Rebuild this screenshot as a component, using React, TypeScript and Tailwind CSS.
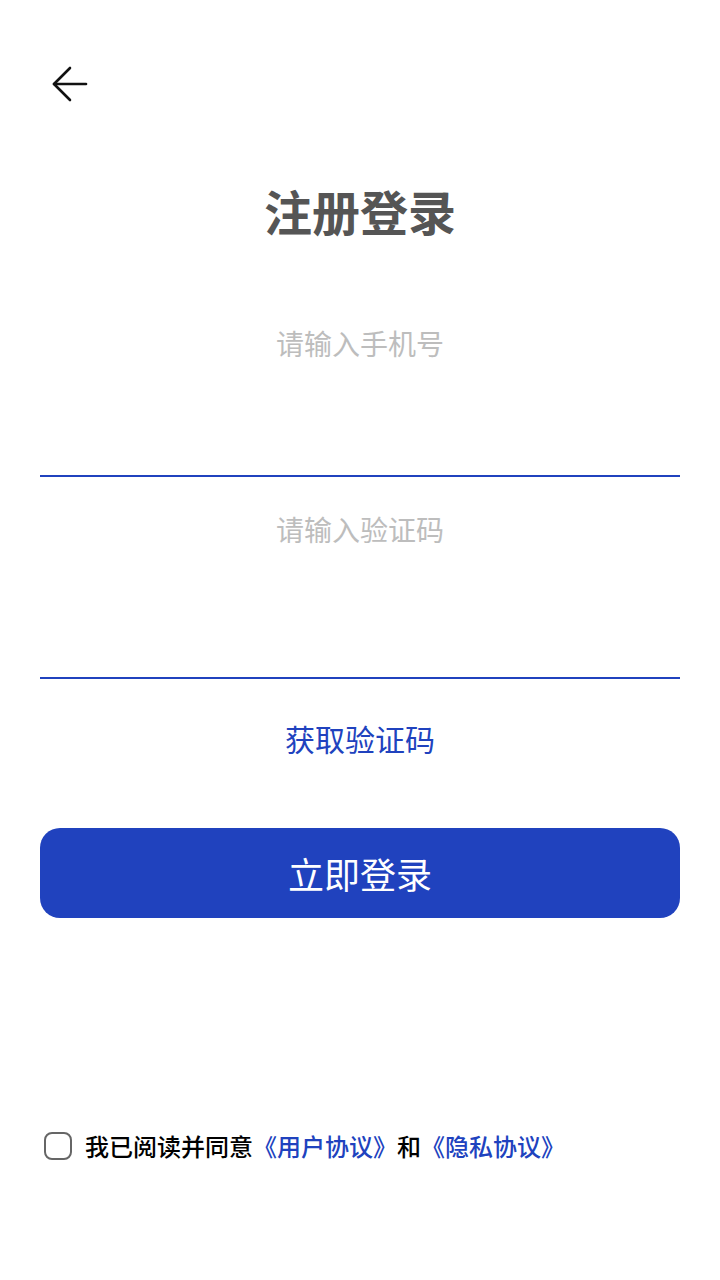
import React from 'react';

const font = { fontFamily: '"Noto Sans CJK SC", "Noto Sans", sans-serif' };

function BackArrow() {
  return (
    <svg width="36" height="36" viewBox="0 0 36 36" fill="none" stroke="#111" strokeWidth="2.6" strokeLinecap="round" strokeLinejoin="round">
      <path d="M34 18H2" />
      <path d="M18 2L2 18l16 16" />
    </svg>
  );
}

export default function App() {
  return (
    <div className="w-[720px] h-[1280px] bg-white flex flex-col" style={font}>
      <div className="pt-[66px] pl-[52px]">
        <button className="block w-9 h-9">
          <BackArrow />
        </button>
      </div>

      <h1 className="mt-[72px] text-center text-[48px] leading-[72px] font-bold text-[#555555]">
        注册登录
      </h1>

      <div className="px-10">
        {/* phone number */}
        <div className="mt-[54px] border-b-2 border-[#2042be]">
          <input
            className="block w-full h-[86px] mb-[89px] text-center text-[28px] text-[#333] placeholder:text-[#bdbdbd] outline-none"
            placeholder="请输入手机号"
          />
        </div>

        {/* sms code */}
        <div className="mt-[9px] border-b-2 border-[#2042be]">
          <input
            className="block w-full h-[86px] mb-[105px] text-center text-[28px] text-[#333] placeholder:text-[#bdbdbd] outline-none"
            placeholder="请输入验证码"
          />
        </div>

        <div className="mt-[37px] text-center text-[30px] leading-[45px] text-[#2042be]">
          获取验证码
        </div>

        <button className="mt-[67px] w-full h-[90px] rounded-[20px] bg-[#2042be] text-white text-[36px]">
          立即登录
        </button>

        <div className="mt-[214px] flex items-center">
          <span className="ml-1 w-7 h-7 rounded-[8px] border-2 border-[#666] shrink-0" />
          <span className="ml-[13px] text-[24px] leading-[28px] font-medium text-black">
            我已阅读并同意<span className="text-[#2042be]">《用户协议》</span>和<span className="text-[#2042be]">《隐私协议》</span>
          </span>
        </div>
      </div>
    </div>
  );
}
